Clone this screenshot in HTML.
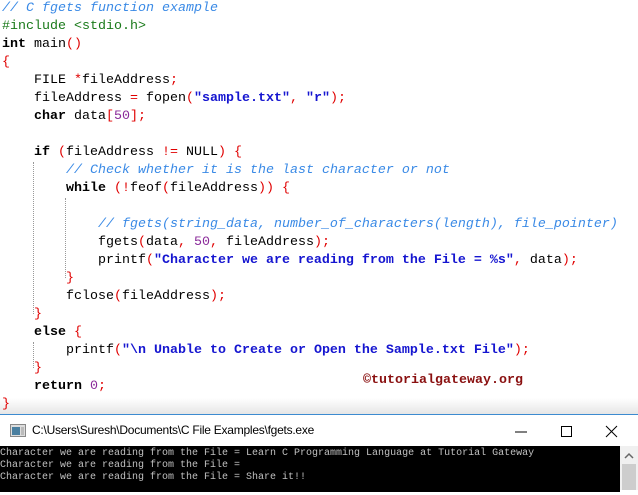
<!DOCTYPE html>
<html><head><style>
body{margin:0;width:638px;height:489px;overflow:hidden;background:#fff;position:relative}
#code{position:absolute;left:2px;top:0;margin:0;font:13.33px/18px "Liberation Mono",monospace;color:#000;white-space:pre;z-index:2}
.c{color:#3a8ae6;font-style:italic}.p{color:#1a7a1a}.k{font-weight:bold}.r{color:#e00000}.s{color:#1515d0;font-weight:bold}.n{color:#8a2a9a}
.g{position:absolute;border-left:1px dotted #999}
#wm{position:absolute;left:363px;top:372px;font:bold 13.33px/18px "Liberation Mono",monospace;color:#8a1010;z-index:2}
#fade{position:absolute;left:0;top:398px;width:638px;height:16px;background:linear-gradient(#fff,#e6e6e6);z-index:1}
#win{position:absolute;left:0;top:414px;width:638px;height:75px;background:#fff;border-top:1px solid #3c8bd0;z-index:3}
#title{position:absolute;left:32px;top:8px;font:12px "Liberation Sans",sans-serif;letter-spacing:-0.25px;color:#000}
#con{position:absolute;left:0;top:31px;width:620px;height:44px;background:#000;color:#c0c0c0;font:10px/12px "Liberation Mono",monospace;white-space:pre;padding-top:2px}
#sb{position:absolute;left:620px;top:31px;width:18px;height:44px;background:#f0f0f0}
</style></head><body>
<div class="g" style="left:33px;top:162px;height:152px"></div>
<div class="g" style="left:65px;top:198px;height:80px"></div>
<div class="g" style="left:33px;top:342px;height:26px"></div>
<pre id="code"><span class="c">// C fgets function example</span>
<span class="p">#include &lt;stdio.h&gt;</span>
<span class="k">int</span> main<span class="r">()</span>
<span class="r">{</span>
    FILE <span class="r">*</span>fileAddress<span class="r">;</span>
    fileAddress <span class="r">=</span> fopen<span class="r">(</span><span class="s">"sample.txt"</span><span class="r">,</span> <span class="s">"r"</span><span class="r">);</span>
    <span class="k">char</span> data<span class="r">[</span><span class="n">50</span><span class="r">];</span>

    <span class="k">if</span> <span class="r">(</span>fileAddress <span class="r">!=</span> NULL<span class="r">) {</span>
        <span class="c">// Check whether it is the last character or not</span>
        <span class="k">while</span> <span class="r">(!</span>feof<span class="r">(</span>fileAddress<span class="r">)) {</span>

            <span class="c">// fgets(string_data, number_of_characters(length), file_pointer)</span>
            fgets<span class="r">(</span>data<span class="r">,</span> <span class="n">50</span><span class="r">,</span> fileAddress<span class="r">);</span>
            printf<span class="r">(</span><span class="s">"Character we are reading from the File = %s"</span><span class="r">,</span> data<span class="r">);</span>
        <span class="r">}</span>
        fclose<span class="r">(</span>fileAddress<span class="r">);</span>
    <span class="r">}</span>
    <span class="k">else</span> <span class="r">{</span>
        printf<span class="r">(</span><span class="s">"\n Unable to Create or Open the Sample.txt File"</span><span class="r">);</span>
    <span class="r">}</span>
    <span class="k">return</span> <span class="n">0</span><span class="r">;</span>
<span class="r">}</span></pre>
<div id="wm">©tutorialgateway.org</div>
<div id="fade"></div>
<div id="win">
<svg style="position:absolute;left:10px;top:9px" width="16" height="13"><rect x="0.5" y="0.5" width="15" height="12" fill="#ddd" stroke="#888"/><rect x="2" y="3" width="8" height="8" fill="#4a7fa0"/><rect x="11" y="3" width="3" height="8" fill="#bbb"/></svg>
<div id="title">C:\Users\Suresh\Documents\C File Examples\fgets.exe</div>
<svg style="position:absolute;left:515px;top:9px" width="110" height="16"><line x1="0" y1="8" x2="12" y2="8" stroke="#000"/><rect x="46.5" y="2.5" width="10" height="10" fill="none" stroke="#000"/><path d="M91 2L102 13M102 2L91 13" stroke="#000"/></svg>
<div id="con">Character we are reading from the File = Learn C Programming Language at Tutorial Gateway
Character we are reading from the File =
Character we are reading from the File = Share it!!</div>
<div id="sb"><svg width="18" height="44"><path d="M5 12L9 8L13 12" fill="none" stroke="#666" stroke-width="1.5"/><rect x="2" y="18" width="14" height="26" fill="#cdcdcd"/></svg></div>
</div>
</body></html>
